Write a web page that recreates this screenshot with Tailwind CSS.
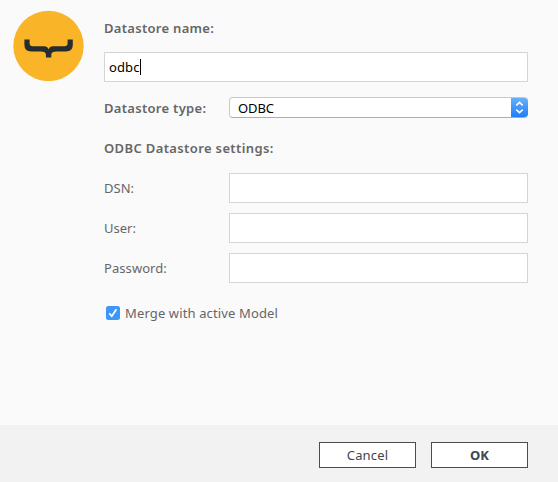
<!DOCTYPE html>
<html lang="en">
<head>
<meta charset="utf-8">
<title>Datastore</title>
<script src="https://cdn.jsdelivr.net/npm/@tailwindcss/browser@4"></script>
</head>
<body class="flex h-screen flex-col overflow-hidden bg-[#fafafa] font-['Noto_Sans','Open_Sans',sans-serif] text-[13px] leading-5 text-[#666]">
<main class="flex flex-1 pt-[10px] pr-[30px] pl-[13px]">
  <svg class="mr-5 h-[71px] w-[71px] shrink-0" viewBox="0 0 71 71" fill="none">
    <circle cx="35.5" cy="35.9" r="35.2" fill="#fab427"/>
    <path d="M11.4 29.6h5.2v3.6q0 3 3.2 3h11.4q3.3 0 4.4 3.1q1.1-3.1 4.4-3.1h11.4q3.2 0 3.2-3v-3.6h5.2v5.2q0 6.6-6.8 6.6h-9.5q-5.2 0-5.2 3.2v2.8h-5.4v-2.8q0-3.2-5.2-3.2h-9.5q-6.8 0-6.8-6.6z" fill="#262d31"/>
  </svg>
  <div class="flex min-w-0 flex-1 flex-col pt-2">
    <label class="h-[34px] font-semibold tracking-[0.3px]">Datastore name:</label>
    <div class="flex h-[30px] items-center border border-[#d5d5d5] bg-white pl-1 text-black"><span class="tracking-[0.1px]">odbc</span><span class="h-4 w-px bg-black"></span></div>
    <div class="mt-[15px] flex h-[21px] items-center">
      <label class="w-[125px] font-semibold tracking-[0.3px]">Datastore type:</label>
      <div class="flex h-[21px] flex-1 items-center overflow-hidden rounded border border-[#c8c8c8] border-r-0 border-b-[#adadad] bg-white pl-2 text-black">
        <span class="flex-1 tracking-[-0.1px]">ODBC</span>
        <svg class="-my-px h-[21px] w-[17px]" viewBox="0 0 17 21" fill="none">
          <defs><linearGradient id="blue" x1="0" y1="0" x2="0" y2="1"><stop stop-color="#6bb3fa"/><stop offset="1" stop-color="#1a7bfc"/></linearGradient></defs>
          <path d="M0 0H17V21H0Z" fill="url(#blue)"/>
          <path d="M5.3 8.4 8.5 5.4l3.2 3M5.3 12.6l3.2 3 3.2-3" stroke="#fff" stroke-width="1.5"/>
        </svg>
      </div>
    </div>
    <h2 class="mt-5 h-5 font-semibold tracking-[0.37px]">ODBC Datastore settings:</h2>
    <div class="mt-[15px] flex flex-col gap-[10px]">
      <div class="flex h-[30px] items-center"><label class="w-[125px]">DSN:</label><div class="h-[30px] flex-1 border border-[#d5d5d5] bg-white"></div></div>
      <div class="flex h-[30px] items-center"><label class="w-[125px]">User:</label><div class="h-[30px] flex-1 border border-[#d5d5d5] bg-white"></div></div>
      <div class="flex h-[30px] items-center"><label class="w-[125px] tracking-[0.07px]">Password:</label><div class="h-[30px] flex-1 border border-[#d5d5d5] bg-white"></div></div>
    </div>
    <div class="mt-5 flex h-5 items-center pl-0.5">
      <svg class="mr-[5px] h-[14px] w-[14px]" viewBox="0 0 14 14" fill="none"><rect width="14" height="14" rx="2.5" fill="#3c97f9"/><path d="m3.3 7.4 2.5 2.8 4.6-7" stroke="#fff" stroke-width="1.7"/></svg>
      <span class="tracking-[0.13px]">Merge with active Model</span>
    </div>
  </div>
</main>
<footer class="flex h-[57px] justify-end gap-[15px] bg-[#f2f2f2] pt-[17px] pr-[30px] text-[#41464a]">
  <button class="h-[26px] w-[97px] border border-[#484d50] bg-white tracking-[0.15px]">Cancel</button>
  <button class="h-[26px] w-[97px] border border-[#484d50] bg-white font-bold">OK</button>
</footer>
</body>
</html>
